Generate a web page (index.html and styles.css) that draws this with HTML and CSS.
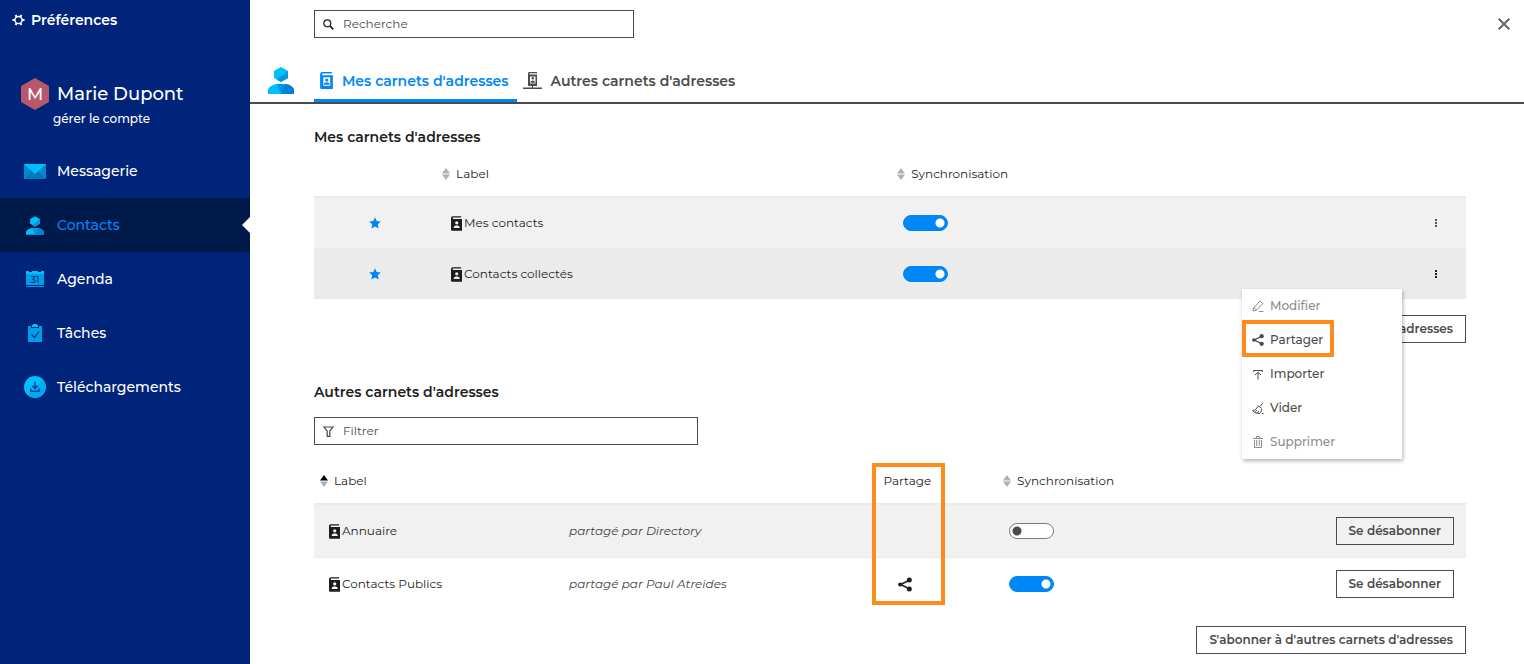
FILE: index.html
```html
<!DOCTYPE html>
<html lang="fr">
<head>
<meta charset="utf-8">
<meta name="viewport" content="width=device-width, initial-scale=1">
<title>Préférences - Contacts</title>
<link rel="stylesheet" href="styles.css">
</head>
<body>
<svg class="sprite" aria-hidden="true">
  <symbol id="person" viewBox="0 0 26 27">
    <path fill="#00bfff" d="M13 0l7 4v7l-7 4-7-4V4z"/>
    <path fill="#0098e0" d="M20 4v7l-7 4-4-2.300z"/>
    <path fill="#00bfff" d="M0 27v-4c0-2.500 5-6 9.500-6h7c4.500 0 9.500 3.500 9.500 6v4z"/>
    <path fill="#0098e0" d="M9 17l4 10 4-10z"/>
    <path fill="#0080d0" d="M17 17c4.500 0 9 3.500 9 6v4H13z"/>
  </symbol>
  <symbol id="book" viewBox="0 0 12 16">
    <path fill="currentColor" fill-rule="evenodd" d="M2 0h9v1.500H2v1.500H12V16H1.500Q0 16 0 14.500V2Q0 0 2 0zM6.250 5.500a1.800 1.800 0 1 0 0 3.600 1.800 1.800 0 0 0 0-3.600zM3 13h6.500v-1c0-2.600-6.500-2.600-6.500 0z"/>
  </symbol>
  <symbol id="card-book" viewBox="0 0 12 16">
    <path fill="currentColor" fill-rule="evenodd" d="M2 0h9v1.500H2v1.500H12V16H1.500Q0 16 0 14.500V2Q0 0 2 0zM3 5v8h6.500V5z"/>
    <path fill="currentColor" d="M6.250 6a1.500 1.500 0 1 1 0 3 1.500 1.500 0 0 1 0-3zM3.500 12c0-3 5.500-3 5.500 0z"/>
  </symbol>
  <symbol id="share" viewBox="0 0 14 14">
    <path d="M12 2.500L2.500 7l9.500 4.500" fill="none" stroke="currentColor" stroke-width="1.500"/>
    <circle cx="11.300" cy="2.600" r="2.500" fill="currentColor"/><circle cx="2.200" cy="7" r="2.100" fill="currentColor"/><circle cx="11.300" cy="11.400" r="2.500" fill="currentColor"/>
  </symbol>
  <symbol id="star" viewBox="0 0 12 12">
    <path fill="currentColor" d="M6 .3l1.700 3.700 4.100.5-3 2.800.8 4.200L6 9.500l-3.600 2 .8-4.200-3-2.800 4.100-.5z"/>
  </symbol>
  <symbol id="dots" viewBox="0 0 3 9">
    <path fill="currentColor" d="M0 0h2v2H0zM0 3h2v2H0zM0 6h2v2H0z"/>
  </symbol>
  <symbol id="sort" viewBox="0 0 8 12">
    <path fill="currentColor" d="M4 0l4 5.500H0z"/><path fill="#b0b0b0" d="M0 6.500h8L4 12z"/>
  </symbol>
</svg>

<div class="app">
  <aside class="sidebar">
    <a class="prefs" href="#preferences">
      <svg width="13" height="12" viewBox="0 0 13 12" aria-hidden="true"><g fill="none" stroke="#fff"><circle cx="6.500" cy="6" r="3.600" stroke-width="1.500"/><path stroke-width="2" d="M10 6h2.500M8.300 9l1.100 2M4.700 9l-1.100 2M3 6H.5M4.700 3L3.600 1M8.300 3l1.100-2"/></g></svg>
      <span>Préférences</span>
    </a>
    <div class="account">
      <svg class="avatar" width="28" height="32" viewBox="0 0 28 32" aria-hidden="true"><path fill="#b8576b" d="M14 0l14 8v16l-14 8L0 24V8z"/><text x="14" y="22" text-anchor="middle">M</text></svg>
      <span class="account-name">Marie Dupont</span>
      <a class="account-link" href="#compte">gérer le compte</a>
    </div>
    <nav class="nav">
      <a class="nav-item" href="#messagerie">
        <svg width="22" height="15" viewBox="0 0 22 15" aria-hidden="true"><path fill="#0088d0" d="M0 0h22v15H0z"/><path fill="#0078c0" d="M0 15l8.500-8h5L22 15z"/><path fill="#00bfff" d="M0 0h22L11 10z"/></svg>
        <span>Messagerie</span>
      </a>
      <a class="nav-item active" href="#contacts" aria-current="page">
        <svg width="18" height="19"><use href="#person"/></svg>
        <span>Contacts</span>
      </a>
      <a class="nav-item" href="#agenda">
        <svg width="18" height="18" viewBox="0 0 18 18" aria-hidden="true"><path fill="#009ee8" d="M0 2h18v13H0zM0 16h18v1H0z"/><path fill="#00bfff" d="M0 1h3v1h3V1h6v1h3V1h3v3H0z"/><text class="cal-day" x="9" y="13" text-anchor="middle">31</text></svg>
        <span>Agenda</span>
      </a>
      <a class="nav-item" href="#taches">
        <svg width="14" height="18" viewBox="0 0 14 18" aria-hidden="true"><path fill="#009ee8" d="M0 2h14v16H0z"/><path fill="#002479" d="M3 2h8v2H3z"/><path fill="#00bfff" d="M4 1h1V0h4v1h1v2H4z"/><path fill="none" stroke="#002479" stroke-width="1.200" d="M3.500 10.500l3 3 4.500-6"/></svg>
        <span>Tâches</span>
      </a>
      <a class="nav-item" href="#telechargements">
        <svg width="22" height="22" viewBox="0 0 22 22" aria-hidden="true"><circle cx="11" cy="11" r="11" fill="#00bfff"/><path fill="#009ee8" d="M19 3.500A11 11 0 0 1 3.500 19z" opacity=".6"/><path fill="none" stroke="#00408f" stroke-width="1.500" d="M11 5.500V12M8.300 9.800l2.700 2.700 2.700-2.700M6.700 12.500v2.700h8.600v-2.700"/></svg>
        <span>Téléchargements</span>
      </a>
    </nav>
  </aside>

  <main class="main">
    <header class="topbar">
      <label class="field search">
        <svg width="11" height="11" viewBox="0 0 11 11" aria-hidden="true"><g fill="none" stroke="#1d1d1f"><circle cx="4.300" cy="4.300" r="3.500" stroke-width="1.200"/><path stroke-width="1.700" d="M6.800 6.800l3.500 3.500"/></g></svg>
        <input type="search" placeholder="Recherche" aria-label="Recherche">
      </label>
      <button class="close" type="button" aria-label="Fermer"><svg width="12" height="12" viewBox="0 0 12 12"><path fill="none" stroke="#666" stroke-width="2" d="M.7.700l10.600 10.600M11.300.7L.7 11.300"/></svg></button>
    </header>

    <div class="tabs">
      <svg class="tabs-logo" width="26" height="27" aria-hidden="true"><use href="#person"/></svg>
      <a class="tab selected" href="#mes-carnets">
        <svg width="13" height="17"><use href="#card-book"/></svg>
        <span>Mes carnets d'adresses</span>
      </a>
      <a class="tab" href="#autres-carnets">
        <svg width="19" height="18" viewBox="0 0 19 18" aria-hidden="true"><path fill="currentColor" fill-rule="evenodd" d="M6 0h8v1.200H6.500v1.300H14V14H6q-1 0-1-1V1.500Q5 0 6 0zM7 4.500v7h5.500v-7z"/><path fill="currentColor" d="M9.800 5a1.300 1.300 0 1 1 0 2.600 1.300 1.300 0 0 1 0-2.600zM7.500 10.800c0-3 4.500-3 4.500 0zM9 14h1v1.500h9V17H0v-1.500h9z"/></svg>
        <span>Autres carnets d'adresses</span>
      </a>
    </div>

    <div class="content">
      <section>
        <h2 id="mes-carnets">Mes carnets d'adresses</h2>
        <table class="books mine">
          <colgroup><col class="c-star"><col class="c-label"><col><col class="c-menu"></colgroup>
          <thead>
            <tr><th></th>
              <th><button class="sort" type="button"><svg width="8" height="12"><use href="#sort"/></svg>Label</button></th>
              <th><button class="sort" type="button"><svg width="8" height="12"><use href="#sort"/></svg>Synchronisation</button></th>
              <th></th></tr>
          </thead>
          <tbody>
            <tr class="shaded">
              <td class="star"><svg width="12" height="12"><use href="#star"/></svg></td>
              <td><span class="book"><svg width="11" height="15"><use href="#book"/></svg>Mes contacts</span></td>
              <td><input class="toggle" type="checkbox" checked aria-label="Synchroniser Mes contacts"></td>
              <td class="actions"><button class="more" type="button" aria-label="Actions de Mes contacts"><svg width="3" height="9"><use href="#dots"/></svg></button></td>
            </tr>
            <tr class="hovered">
              <td class="star"><svg width="12" height="12"><use href="#star"/></svg></td>
              <td><span class="book"><svg width="11" height="15"><use href="#book"/></svg>Contacts collectés</span></td>
              <td><input class="toggle" type="checkbox" checked aria-label="Synchroniser Contacts collectés"></td>
              <td class="actions"><button class="more open" type="button" aria-label="Actions de Contacts collectés"><svg width="3" height="9"><use href="#dots"/></svg></button>
                <div class="menu">
                  <button type="button" disabled><svg width="12" height="12" viewBox="0 0 12 12"><path fill="none" stroke="currentColor" d="M1.500 8L8 1l3 2.500L4.500 10 1 11zM2 7.500L4.800 10M7 11.500h4.500"/></svg>Modifier</button>
                  <button type="button" class="highlighted"><svg width="12" height="12"><use href="#share"/></svg>Partager</button>
                  <button type="button"><svg width="10" height="11" viewBox="0 0 10 11"><path fill="none" stroke="currentColor" d="M.6 3V1.500h8.800V3M5 10.500V3.500M2 6l3-2.700L8 6"/></svg>Importer</button>
                  <button type="button"><svg width="12" height="12" viewBox="0 0 12 12"><path fill="none" stroke="currentColor" d="M11 .5L8.500 4M5.500 3.500l4 2.500M5.500 4.500C5 7 3 8 .7 8.500c1 2 3.300 3 7.300 3 1.200-1.500 1.500-3 1.300-5M3 9.800l1.800-1.500M5.500 11l1.300-2M10 11.500h1.500"/></svg>Vider</button>
                  <button type="button" disabled><svg width="10" height="12" viewBox="0 0 10 12"><path fill="none" stroke="currentColor" d="M0 2.500h10M3.500 2V.5h3V2M1.500 4v7.500h7V4M3.700 4v6M6.300 4v6"/></svg>Supprimer</button>
                </div>
              </td>
            </tr>
          </tbody>
        </table>
        <div class="footer"><button class="button" type="button">Ajouter un carnet d'adresses</button></div>
      </section>

      <section>
        <h2 id="autres-carnets">Autres carnets d'adresses</h2>
        <label class="field filter">
          <svg width="11" height="11" viewBox="0 0 11 11" aria-hidden="true"><path fill="none" stroke="#444" stroke-width="1.200" d="M1 1h9L6.800 5v5.400H4.200V5z"/></svg>
          <input type="text" placeholder="Filtrer" aria-label="Filtrer">
        </label>
        <table class="books others">
          <colgroup><col class="c-name"><col class="c-owner"><col class="c-share"><col><col class="c-unsub"></colgroup>
          <thead>
            <tr>
              <th><button class="sort ascending" type="button"><svg width="8" height="12"><use href="#sort"/></svg>Label</button></th>
              <th></th>
              <th class="share-head">Partage</th>
              <th><button class="sort" type="button"><svg width="8" height="12"><use href="#sort"/></svg>Synchronisation</button></th>
              <th></th>
            </tr>
          </thead>
          <tbody>
            <tr class="shaded">
              <td><span class="book"><svg width="11" height="15"><use href="#book"/></svg>Annuaire</span></td>
              <td class="owner">partagé par Directory</td>
              <td></td>
              <td><input class="toggle" type="checkbox" aria-label="Synchroniser Annuaire"></td>
              <td class="unsubscribe"><button class="button" type="button">Se désabonner</button></td>
            </tr>
            <tr>
              <td><span class="book"><svg width="11" height="15"><use href="#book"/></svg>Contacts Publics</span></td>
              <td class="owner">partagé par Paul Atreides</td>
              <td class="shared"><svg width="14" height="15"><use href="#share"/></svg></td>
              <td><input class="toggle" type="checkbox" checked aria-label="Synchroniser Contacts Publics"></td>
              <td class="unsubscribe"><button class="button" type="button">Se désabonner</button></td>
            </tr>
          </tbody>
        </table>
        <div class="footer"><button class="button" type="button">S'abonner à d'autres carnets d'adresses</button></div>
      </section>
    </div>
  </main>
</div>
</body>
</html>
```
FILE: styles.css
```css
*, *::before, *::after { box-sizing: border-box; }
body {
  margin: 0;
  font: 12px/20px Montserrat, Inter, "Open Sans", sans-serif;
  color: #1d1d1f;
  background: #fff;
}
button, input { font: inherit; color: inherit; }
button { padding: 0; border: 0; background: none; }
a { color: inherit; text-decoration: none; }
svg { display: block; flex: none; }
.sprite { position: absolute; width: 0; height: 0; }

.app { display: flex; min-height: 100vh; }

/* Sidebar */
.sidebar { flex: none; width: 250px; background: #002479; color: #fff; font-size: 14px; font-weight: 500; }
.prefs { display: flex; align-items: center; gap: 6px; height: 40px; padding-left: 12px; font-weight: 600; }
.account {
  display: grid;
  grid-template-columns: 28px 1fr;
  column-gap: 8px;
  align-items: center;
  padding: 38px 0 16px 21px;
}
.avatar text { fill: #fff; font-size: 17px; }
.account-name { font-size: 18px; line-height: 32px; }
.account-link { grid-column: 1 / -1; padding-left: 32px; line-height: 18px; font-size: 12px; }
.nav-item {
  position: relative;
  display: grid;
  grid-template-columns: 28px 1fr;
  align-items: center;
  gap: 8px;
  height: 54px;
  padding-left: 21px;
}
.nav-item svg { margin: 0 auto; }
.nav-item.active { background: #00194b; color: #0087f7; }
.nav-item.active::after {
  content: "";
  position: absolute;
  right: 0;
  top: 19px;
  border: 8px solid transparent;
  border-right-color: #fff;
  border-left: 0;
}
.cal-day { fill: #002479; font-size: 9px; }

/* Header */
.main { flex: 1; min-width: 0; }
.topbar { display: flex; justify-content: space-between; padding: 10px 14px 0 64px; }
.field { display: flex; align-items: center; gap: 9px; height: 28px; padding-left: 8px; border: 1px solid #4b4b4d; }
.field input { flex: 1; min-width: 0; height: 24px; padding: 0 0 1px; border: 0; outline: 0; background: none; }
.field input::placeholder { color: #4b4b4d; opacity: 1; }
.search { width: 320px; }
.close { width: 12px; height: 28px; }
.tabs { display: flex; align-items: stretch; height: 66px; padding: 24px 0 0 18px; border-bottom: 2px solid #4b4b4d; }
.tabs-logo { margin: 5px 20px 0 0; }
.tab { display: flex; align-items: center; gap: 9px; padding: 0 8px 0 6px; font-size: 14px; font-weight: 600; color: #4b4b4d; border-bottom: 3px solid transparent; }
.tab.selected { color: #0087f7; border-color: #0087f7; }

/* Content */
.content { padding: 23px 58px 10px 64px; }
h2 { margin: 0; font-size: 14px; font-weight: 600; line-height: 20px; }
.books { width: 100%; table-layout: fixed; border-collapse: separate; border-spacing: 0; }
th { padding: 0 6px; text-align: left; font-weight: 400; border-bottom: 2px solid #ebebeb; }
td { height: 51px; padding: 0 12px; border-bottom: 1px solid #ebebeb; }
.mine th { height: 51px; padding-top: 5px; }
.mine tr:last-child td { height: 50px; border-bottom: 0; }
.others { margin-top: 14px; }
.others th { height: 46px; }
.others td { height: 53px; }
.others tr:last-child td { border-bottom-color: transparent; }
.shaded td { background: #f1f1f1; }
.hovered td { background: #ebebeb; }
.c-star { width: 10.6%; }
.c-label { width: 39.5%; }
.c-menu { width: 48px; }
.c-name { width: 21.1%; }
.c-owner { width: 27.3%; }
.c-share { width: 10.9%; }
.c-unsub { width: 160px; }

.sort { display: flex; align-items: center; gap: 6px; }
.sort svg { color: #b0b0b0; }
.ascending svg { color: #000; }
.star svg { margin: 0 auto; color: #0087f7; }
.book { display: flex; align-items: center; gap: 2px; padding-left: 3px; }
.owner { font-style: italic; color: #444; }
.toggle {
  display: block;
  appearance: none;
  width: 45px;
  height: 16px;
  margin: 0;
  border: 1px solid #7c7c7e;
  border-radius: 8px;
  background: #fff radial-gradient(circle at 7px 7px, #4b4b4d 4px, transparent 5px);
}
.toggle:checked { border-color: #0087f7; background: #0087f7 radial-gradient(circle at 36px 7px, #fff 4px, transparent 5px); }

.actions { position: relative; }
.more { display: flex; align-items: center; justify-content: center; width: 13px; height: 20px; color: #555; }
.more.open { color: #1d1d1f; }
.menu {
  position: absolute;
  top: 40px;
  right: 64px;
  z-index: 2;
  width: 160px;
  background: #fff;
  box-shadow: 1px 2px 4px rgba(0, 0, 0, .3);
}
.menu button { display: grid; grid-template-columns: 12px 1fr; align-items: center; gap: 6px; width: 100%; height: 34px; padding-left: 10px; text-align: left; color: #4b4b4d; font-weight: 500; }
.menu svg { margin: 0 auto; }
.menu button:disabled { color: #8c8c8c; }
.menu .highlighted { position: relative; }
.highlighted::after { content: ""; position: absolute; inset: -3px auto 0 0; width: 92px; border: 4px solid #ff8c1a; }

.share-head { position: relative; padding-left: 12px; }
.share-head::after { content: ""; position: absolute; z-index: 1; top: 4px; left: 0; width: 73px; height: 142px; border: 4px solid #ff8c1a; }
.shared svg { margin-left: 14px; }

.button { height: 28px; padding: 0 12px; border: 1px solid #4b4b4d; color: #4b4b4d; font-weight: 600; white-space: nowrap; }
.footer { display: flex; justify-content: flex-end; padding: 16px 0 39px; }
.others + .footer { padding: 15px 0 0; }
.unsubscribe .button { display: block; margin-left: auto; }
.filter { width: 384px; max-width: 100%; margin-top: 15px; }
```
